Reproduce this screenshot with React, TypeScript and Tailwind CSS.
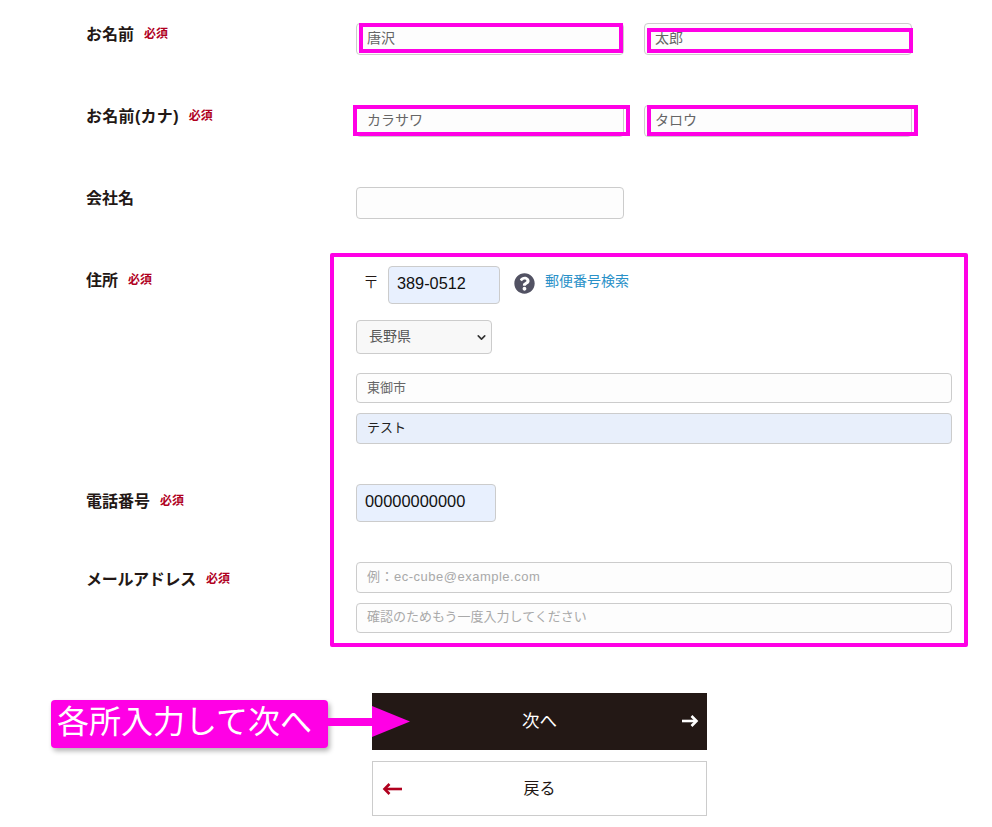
import { FaQuestionCircle } from 'react-icons/fa';
import { ChevronDown } from 'lucide-react';
import type { ReactNode } from 'react';

const inputBase =
  'block rounded-[4px] border border-[#cccccc] px-[10px] outline-none placeholder:text-[#a9a9a9]';

function Required() {
  return <span className="text-[12px] font-bold text-[#b0001e] leading-[22px]">必須</span>;
}

function Row({ label, required, pad, labelClass, children, className }: { label: string; required?: boolean; pad: string; labelClass?: string; children: ReactNode; className: string }) {
  return (
    <div className={`flex ${className}`}>
      <div className={`w-[270px] shrink-0 flex items-start gap-[10px] ${pad}`}>
        <span className={`text-[16px] font-bold text-[#231815] leading-[24px] ${labelClass ?? ''}`}>{label}</span>
        {required && <Required />}
      </div>
      {children}
    </div>
  );
}

export default function App() {
  return (
    <div className="relative h-[827px] w-[992px] overflow-hidden bg-white pl-[86px] pt-[23px] [font-family:'Liberation_Sans','Noto_Sans_CJK_JP',sans-serif]">
      {/* Form rows */}
      <Row label="お名前" required pad="" className="">
        <div className="flex gap-[20px]">
          <input readOnly defaultValue="唐沢" className={`${inputBase} h-[32px] w-[268px] bg-[#fdfdfd] pb-[5px] text-[14px] text-[#666666]`} />
          <input readOnly defaultValue="太郎" className={`${inputBase} h-[32px] w-[268px] bg-[#fdfdfd] pb-[5px] text-[14px] text-[#666666]`} />
        </div>
      </Row>

      <Row label="お名前(カナ)" required pad="" labelClass="tracking-[0.3px]" className="mt-[50px]">
        <div className="flex gap-[20px]">
          <input readOnly defaultValue="カラサワ" className={`${inputBase} h-[32px] w-[268px] bg-[#fdfdfd] pb-[4px] text-[14px] text-[#666666]`} />
          <input readOnly defaultValue="タロウ" className={`${inputBase} h-[32px] w-[268px] bg-[#fdfdfd] pb-[4px] text-[14px] text-[#666666]`} />
        </div>
      </Row>

      <Row label="会社名" pad="" className="mt-[50px]">
        <input readOnly className={`${inputBase} h-[32px] w-[268px] bg-[#fdfdfd] text-[14px]`} />
      </Row>

      <Row label="住所" required pad="pt-[3px]" className="mt-[47px]">
        <div className="flex w-[596px] flex-col">
          <div className="flex items-start">
            <span className="ml-[7px] w-[25px] text-[16px] leading-[34px] font-light text-[#231815]">〒</span>
            <input readOnly defaultValue="389-0512" className="block h-[38px] w-[112px] rounded-[4px] border border-[#cccccc] bg-[#e8f0fe] px-[8px] pb-[3px] text-[16.3px] text-[#111111] outline-none" />
            <FaQuestionCircle size={21} className="ml-[14px] mt-[7px] text-[#525263]" />
            <a className="ml-[10px] text-[14px] leading-[30px] text-[#2a91c8]">郵便番号検索</a>
          </div>
          <div className="relative mt-[16px] h-[34px] w-[136px]">
            <select defaultValue="長野県" className="h-full w-full appearance-none rounded-[4px] border border-[#cccccc] bg-[#f8f8f8] pb-[2px] pl-[12px] text-[14px] text-[#555555] outline-none">
              <option>長野県</option>
            </select>
            <ChevronDown size={13} strokeWidth={3} className="pointer-events-none absolute right-[4px] top-[11px] text-[#333333]" />
          </div>
          <input readOnly defaultValue="東御市" className={`${inputBase} mt-[19px] h-[30px] w-full bg-[#fdfdfd] pb-[4px] text-[13px] text-[#666666]`} />
          <input readOnly defaultValue="テスト" className={`${inputBase} mt-[10px] h-[31px] w-full bg-[#e8effb] pb-[5px] text-[13px] text-[#222222]`} />
        </div>
      </Row>

      <Row label="電話番号" required pad="pt-[6px]" className="mt-[40px]">
        <input readOnly defaultValue="00000000000" className="block h-[38px] w-[140px] rounded-[4px] border border-[#cccccc] bg-[#e8f0fe] px-[8px] pb-[3px] text-[16.4px] text-[#111111] outline-none" />
      </Row>

      <Row label="メールアドレス" required pad="pt-[6px]" labelClass="tracking-[-0.3px]" className="mt-[40px]">
        <div className="flex w-[596px] flex-col gap-[10px]">
          <input readOnly placeholder="例：ec-cube@example.com" className={`${inputBase} h-[31px] w-full bg-[#fdfdfd] pb-[3px] text-[13px] tracking-[0.5px]`} />
          <input readOnly placeholder="確認のためもう一度入力してください" className={`${inputBase} h-[30px] w-full bg-[#fdfdfd] pb-[3px] text-[13px]`} />
        </div>
      </Row>

      {/* Buttons */}
      <div className="ml-[286px] mt-[60px] flex w-[335px] flex-col gap-[11px]">
        <button className="relative flex h-[57px] items-center justify-center bg-[#231815] text-[17.5px] text-white">
          次へ
          <svg width="18" height="14" viewBox="0 0 18 14" className="absolute right-[8px] top-[21px]" fill="none" stroke="#ffffff" strokeWidth="2.6">
            <path d="M1 7h14" />
            <path d="M10.5 2l5 5-5 5" />
          </svg>
        </button>
        <button className="relative flex h-[55px] items-center justify-center border border-[#cccccc] bg-white text-[16px] text-[#231815]">
          戻る
          <svg width="20" height="14" viewBox="0 0 20 14" className="absolute left-[9px] top-[20px]" fill="none" stroke="#b0001e" strokeWidth="2.6">
            <path d="M20 7H3" />
            <path d="M7.5 2L2.5 7l5 5" />
          </svg>
        </button>
      </div>

      {/* Magenta annotations over the form */}
      <div className="absolute left-[359px] top-[23px] h-[30px] w-[264px] border-[4px] border-[#ff00e5]" />
      <div className="absolute left-[647px] top-[28px] h-[25px] w-[266px] border-[4px] border-[#ff00e5]" />
      <div className="absolute left-[353px] top-[105px] h-[31px] w-[277px] border-[4px] border-[#ff00e5]" />
      <div className="absolute left-[647px] top-[105px] h-[31px] w-[271px] border-[4px] border-[#ff00e5]" />
      <div className="absolute left-[330px] top-[253px] h-[394px] w-[638px] rounded-[2px] border-[4px] border-[#ff00e5]" />

      <div className="absolute left-[51px] top-[700px] flex h-[48px] w-[277px] items-center rounded-[4px] bg-[#ff00e5] pb-[4px] pl-[6px] text-[32px] leading-none text-white shadow-[2px_3px_5px_rgba(0,0,0,0.3)]">
        各所入力して次へ
      </div>
      <svg width="83" height="32" viewBox="0 0 83 32" className="absolute left-[328px] top-[706px]" fill="#ff00e5">
        <rect x="0" y="12" width="46" height="8" />
        <path d="M44 0L82 15.5 44 31z" />
      </svg>
    </div>
  );
}
